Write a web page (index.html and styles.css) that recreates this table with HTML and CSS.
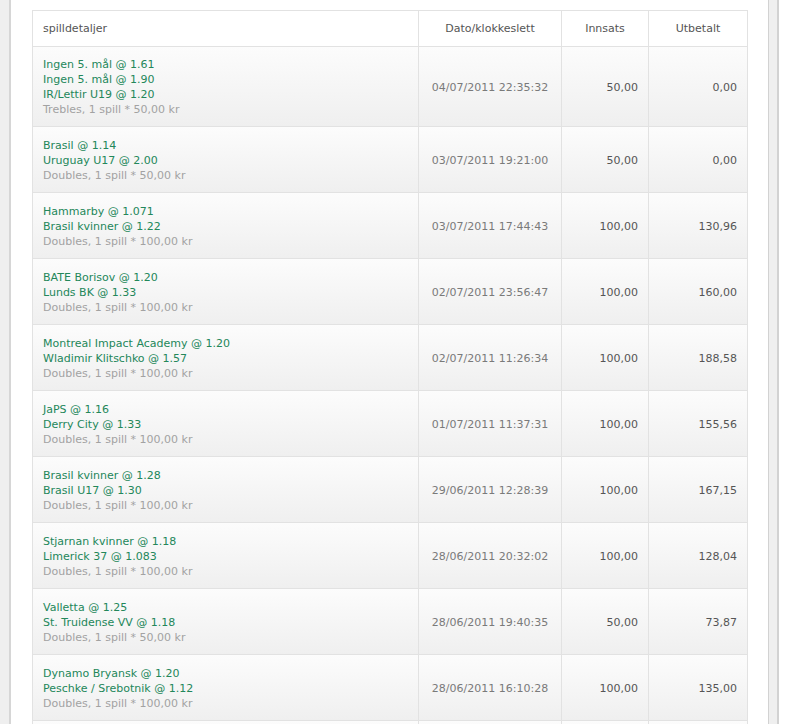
FILE: index.html
```html
<!DOCTYPE html>
<html>
  <head>
    <meta charset="UTF-8">
    <title>Spillhistorikk</title>
    <link rel="stylesheet" href="styles.css">
  </head>

  <body>
    <div class="page">
      <div class="edge-left"></div>

      <div class="main">
        <table class="bets">
          <colgroup>
            <col class="col-details">
            <col class="col-date">
            <col class="col-stake">
            <col class="col-paid">
          </colgroup>
          <thead>
            <tr>
              <th class="head-details">spilldetaljer</th>
              <th>Dato/klokkeslett</th>
              <th>Innsats</th>
              <th>Utbetalt</th>
            </tr>
          </thead>
          <tbody>
            <tr>
              <td class="details">
                <div class="sel">Ingen 5. mål @ 1.61</div>
                <div class="sel">Ingen 5. mål @ 1.90</div>
                <div class="sel">IR/Lettir U19 @ 1.20</div>
                <div class="meta">Trebles, 1 spill * 50,00 kr</div>
              </td>
              <td class="date">04/07/2011 22:35:32</td>
              <td class="num">50,00</td>
              <td class="num">0,00</td>
            </tr>
            <tr>
              <td class="details">
                <div class="sel">Brasil @ 1.14</div>
                <div class="sel">Uruguay U17 @ 2.00</div>
                <div class="meta">Doubles, 1 spill * 50,00 kr</div>
              </td>
              <td class="date">03/07/2011 19:21:00</td>
              <td class="num">50,00</td>
              <td class="num">0,00</td>
            </tr>
            <tr>
              <td class="details">
                <div class="sel">Hammarby @ 1.071</div>
                <div class="sel">Brasil kvinner @ 1.22</div>
                <div class="meta">Doubles, 1 spill * 100,00 kr</div>
              </td>
              <td class="date">03/07/2011 17:44:43</td>
              <td class="num">100,00</td>
              <td class="num">130,96</td>
            </tr>
            <tr>
              <td class="details">
                <div class="sel">BATE Borisov @ 1.20</div>
                <div class="sel">Lunds BK @ 1.33</div>
                <div class="meta">Doubles, 1 spill * 100,00 kr</div>
              </td>
              <td class="date">02/07/2011 23:56:47</td>
              <td class="num">100,00</td>
              <td class="num">160,00</td>
            </tr>
            <tr>
              <td class="details">
                <div class="sel">Montreal Impact Academy @ 1.20</div>
                <div class="sel">Wladimir Klitschko @ 1.57</div>
                <div class="meta">Doubles, 1 spill * 100,00 kr</div>
              </td>
              <td class="date">02/07/2011 11:26:34</td>
              <td class="num">100,00</td>
              <td class="num">188,58</td>
            </tr>
            <tr>
              <td class="details">
                <div class="sel">JaPS @ 1.16</div>
                <div class="sel">Derry City @ 1.33</div>
                <div class="meta">Doubles, 1 spill * 100,00 kr</div>
              </td>
              <td class="date">01/07/2011 11:37:31</td>
              <td class="num">100,00</td>
              <td class="num">155,56</td>
            </tr>
            <tr>
              <td class="details">
                <div class="sel">Brasil kvinner @ 1.28</div>
                <div class="sel">Brasil U17 @ 1.30</div>
                <div class="meta">Doubles, 1 spill * 100,00 kr</div>
              </td>
              <td class="date">29/06/2011 12:28:39</td>
              <td class="num">100,00</td>
              <td class="num">167,15</td>
            </tr>
            <tr>
              <td class="details">
                <div class="sel">Stjarnan kvinner @ 1.18</div>
                <div class="sel">Limerick 37 @ 1.083</div>
                <div class="meta">Doubles, 1 spill * 100,00 kr</div>
              </td>
              <td class="date">28/06/2011 20:32:02</td>
              <td class="num">100,00</td>
              <td class="num">128,04</td>
            </tr>
            <tr>
              <td class="details">
                <div class="sel">Valletta @ 1.25</div>
                <div class="sel">St. Truidense VV @ 1.18</div>
                <div class="meta">Doubles, 1 spill * 50,00 kr</div>
              </td>
              <td class="date">28/06/2011 19:40:35</td>
              <td class="num">50,00</td>
              <td class="num">73,87</td>
            </tr>
            <tr>
              <td class="details">
                <div class="sel">Dynamo Bryansk @ 1.20</div>
                <div class="sel">Peschke / Srebotnik @ 1.12</div>
                <div class="meta">Doubles, 1 spill * 100,00 kr</div>
              </td>
              <td class="date">28/06/2011 16:10:28</td>
              <td class="num">100,00</td>
              <td class="num">135,00</td>
            </tr>
            <tr class="row-next">
              <td></td>
              <td></td>
              <td></td>
              <td></td>
            </tr>
          </tbody>
        </table>
      </div>

      <div class="edge-right"></div>
    </div>
  </body>
</html>
```

FILE: styles.css
```css
* {
  font-family: "DejaVu Sans", Verdana, sans-serif;
  font-size: 11px;
}

body {
  margin: 0;
  background: #fff;
  overflow: hidden;
}

.page {
  display: flex;
  align-items: stretch;
  height: 724px;
  overflow: hidden;
}

.edge-left {
  width: 9px;
  flex: none;
  background: #efefef;
  border-right: 2px solid #d6d6d6;
}

.main {
  width: 716px;
  flex: none;
  padding: 10px 20px 0 21px;
  background: #fff;
}

.edge-right {
  width: 8px;
  flex: none;
  background: #efefef;
  border-left: 1px solid #d2d2d2;
  border-right: 2px solid #d2d2d2;
}

.bets {
  border-spacing: 0;
  border-collapse: collapse;
  width: 715px;
  table-layout: fixed;
  border: 1px solid #e2e2e2;
}

.col-details { width: 386px; }
.col-date { width: 143px; }
.col-stake { width: 87px; }
.col-paid { width: 99px; }

.bets th, .bets td {
  border: 1px solid #e2e2e2;
  box-sizing: border-box;
}

.bets th {
  height: 36px;
  padding: 0 10px;
  font-weight: normal;
  color: #555;
  text-align: center;
  background: #fff;
}

.bets th.head-details {
  text-align: left;
}

.bets tbody tr {
  background: linear-gradient(#fcfcfc, #efefef);
}

.bets td {
  padding: 11px 10px 9px;
  line-height: 15px;
  vertical-align: middle;
}

.bets tbody tr:first-child td {
  padding: 10px 10px 9px;
}

.bets tr.row-next td {
  height: 66px;
}

.bets td.details {
  vertical-align: top;
}

.sel {
  color: #23875a;
}

.meta {
  color: #a2a2a2;
}

.date {
  text-align: center;
  color: #7a7a7a;
}

.num {
  text-align: right;
  color: #555;
}
```
